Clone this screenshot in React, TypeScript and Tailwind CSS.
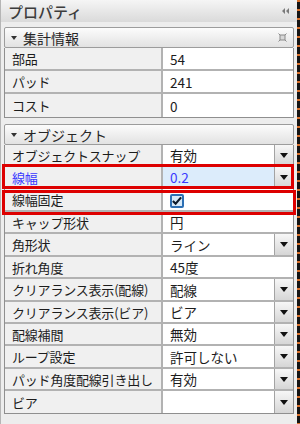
import React from "react"

interface IRow {
    label: string
    value?: string
    dropdown?: boolean
    checkbox?: boolean
    highlight?: boolean
    tall?: boolean
}

const summaryRows: IRow[] = [
    { label: "部品", value: "54" },
    { label: "パッド", value: "241" },
    { label: "コスト", value: "0" },
]

const objectRows: IRow[] = [
    { label: "オブジェクトスナップ", value: "有効", dropdown: true },
    { label: "線幅", value: "0.2", dropdown: true, highlight: true },
    { label: "線幅固定", checkbox: true, tall: true },
    { label: "キャップ形状", value: "円" },
    { label: "角形状", value: "ライン", dropdown: true, tall: true },
    { label: "折れ角度", value: "45度" },
    { label: "クリアランス表示(配線)", value: "配線", dropdown: true, tall: true },
    { label: "クリアランス表示(ビア)", value: "ビア", dropdown: true },
    { label: "配線補間", value: "無効", dropdown: true },
    { label: "ループ設定", value: "許可しない", dropdown: true, tall: true },
    { label: "パッド角度配線引き出し", value: "有効", dropdown: true },
    { label: "ビア", dropdown: true },
]

const DropButton = () => (
    <div className="flex h-full w-[19px] shrink-0 items-center justify-center border-l border-[#a3a3a3] bg-linear-to-b from-[#f7f7f7] to-[#d6d6d6]">
        <svg width="8" height="5" viewBox="0 0 8 5">
            <path d="M0 0 H8 L4 5 Z" fill="#111" />
        </svg>
    </div>
)

const CheckBox = () => (
    <div className="flex h-[14px] w-[14px] items-center justify-center rounded-[2px] border-2 border-[#2c6fb3] bg-[#d7e9f8]">
        <svg width="11" height="10" viewBox="0 0 11 10">
            <path d="M1 5 L4 8 L10 1" fill="none" stroke="#0c1a2a" strokeWidth="2.4" />
        </svg>
    </div>
)

const PropertyRow = ({ label, value, dropdown, checkbox, highlight, tall }: IRow) => {
    return (
        <div className={`flex ${tall ? "h-[23px]" : "h-[22px]"} border-b-2 border-[#b2b2b2] last:border-b-0`}>
            <div
                className={`flex w-[158px] shrink-0 items-center overflow-hidden whitespace-nowrap border-r-2 border-[#b2b2b2] bg-[#f0f0f0] pl-[7px] text-[13px] tracking-[-0.2px] ${
                    highlight ? "text-[#3a3aff]" : "text-[#1c1c1c]"
                }`}
            >
                <span className="leading-none">{label}</span>
            </div>
            <div className={`flex flex-1 items-center ${highlight ? "bg-[#dcecfb]" : "bg-white"}`}>
                <div className={`flex flex-1 items-center pl-[7px] pt-[2px] ${highlight ? "text-[#3a3aff]" : "text-[#1c1c1c]"}`}>
                    {checkbox ? <CheckBox /> : <span className="leading-none">{value}</span>}
                </div>
                {dropdown && <DropButton />}
            </div>
        </div>
    )
}

const SectionHeader = ({ title, pin }: { title: string; pin?: boolean }) => (
    <div className="flex h-[21px] items-center rounded-[2px] border border-[#9c9c9c] bg-linear-to-b from-[#fcfcfc] to-[#e2e2e2] pl-[6px] pr-[6px]">
        <svg width="6" height="4" viewBox="0 0 6 4" className="mr-[6px]">
            <path d="M0 0 H6 L3 4 Z" fill="#333" />
        </svg>
        <span className="flex-1 text-[14px] leading-none text-[#262626]">{title}</span>
        {pin && (
            <svg width="9" height="9" viewBox="0 0 9 9">
                <rect x="2" y="2" width="5" height="5" fill="#d8d8d8" stroke="#8a8a8a" />
                <path d="M0.5 0.5 L2 2 M8.5 0.5 L7 2 M0.5 8.5 L2 7 M8.5 8.5 L7 7" stroke="#8a8a8a" />
            </svg>
        )}
    </div>
)

const App = () => {
    return (
        <div className="relative flex h-[424px] w-[300px] overflow-hidden bg-[#141414] font-['Noto_Sans_CJK_JP','Noto_Sans',sans-serif] text-[13.5px]">
            <div className="flex w-[297px] flex-col border-l border-[#b5b5b5] bg-[#ededed]">
                <div className="flex h-[22px] shrink-0 items-center justify-between bg-linear-to-b from-[#f5f5f5] to-[#dadada] pl-[7px] pr-[7px]">
                    <span className="text-[15px] font-medium leading-none text-[#3c3c3c]">プロパティ</span>
                    <svg width="8" height="6" viewBox="0 0 8 6">
                        <path d="M3 0 L0 3 L3 6 Z M7 0 L4 3 L7 6 Z" fill="#7a7a7a" />
                    </svg>
                </div>
                <div className="flex flex-col pl-[3px] pr-[3px] pt-[5px]">
                    <SectionHeader title="集計情報" pin />
                    <div className="flex flex-col border border-t-0 border-[#8f8f8f]">
                        {summaryRows.map(row => (
                            <PropertyRow key={row.label} {...row} tall />
                        ))}
                    </div>
                    <div className="mt-[6px]">
                        <SectionHeader title="オブジェクト" />
                    </div>
                    <div className="flex flex-col border border-t-0 border-[#8f8f8f]">
                        {objectRows.map(row => (
                            <PropertyRow key={row.label} {...row} />
                        ))}
                    </div>
                </div>
            </div>
            <div className="w-[3px] bg-[repeating-linear-gradient(to_bottom,#d9702a_0px,#d9702a_2px,#141414_2px,#141414_9px)]" />

            <div className="pointer-events-none absolute left-[2px] top-[164px] h-[25px] w-[292px] border-[3px] border-[#dd0000]" />
            <div className="pointer-events-none absolute left-[2px] top-[190px] h-[25px] w-[294px] border-[3px] border-[#dd0000]" />
        </div>
    )
}

export default App
